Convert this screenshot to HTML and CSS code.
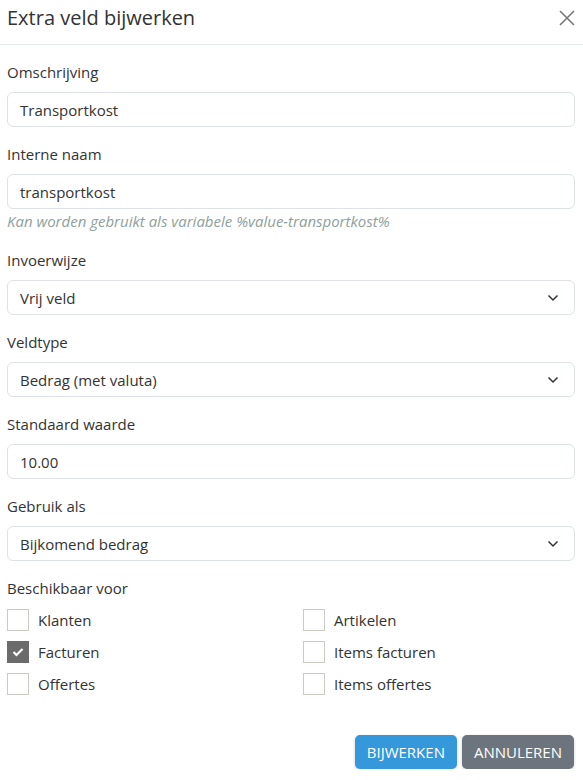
FILE: index.html
```html
<!DOCTYPE html>
<html lang="nl">
<head>
<meta charset="utf-8">
<link rel="stylesheet" href="styles.css">
</head>
<body>
<div class="modal">
  <div class="header">
    <h1 class="title">Extra veld bijwerken</h1>
    <svg class="close" width="16" height="16" viewBox="0 0 16 16"><path d="M1 1L15 15M15 1L1 15" stroke="#777" stroke-width="1.6" fill="none"/></svg>
  </div>
  <div class="body">
    <div class="group">
      <label class="label">Omschrijving</label>
      <div class="field">Transportkost</div>
    </div>
    <div class="group">
      <label class="label">Interne naam</label>
      <div class="field">transportkost</div>
      <div class="hint">Kan worden gebruikt als variabele %value-transportkost%</div>
    </div>
    <div class="group">
      <label class="label">Invoerwijze</label>
      <div class="field select">Vrij veld<svg class="chev" width="12" height="8" viewBox="0 0 12 8"><path d="M1.5 1.5L6 6L10.5 1.5" stroke="#333" stroke-width="1.5" fill="none"/></svg></div>
    </div>
    <div class="group">
      <label class="label">Veldtype</label>
      <div class="field select">Bedrag (met valuta)<svg class="chev" width="12" height="8" viewBox="0 0 12 8"><path d="M1.5 1.5L6 6L10.5 1.5" stroke="#333" stroke-width="1.5" fill="none"/></svg></div>
    </div>
    <div class="group">
      <label class="label">Standaard waarde</label>
      <div class="field">10.00</div>
    </div>
    <div class="group">
      <label class="label">Gebruik als</label>
      <div class="field select">Bijkomend bedrag<svg class="chev" width="12" height="8" viewBox="0 0 12 8"><path d="M1.5 1.5L6 6L10.5 1.5" stroke="#333" stroke-width="1.5" fill="none"/></svg></div>
    </div>
    <div class="group last">
      <label class="label">Beschikbaar voor</label>
      <div class="checks">
        <div class="check"><span class="box"></span>Klanten</div>
        <div class="check"><span class="box"></span>Artikelen</div>
        <div class="check"><span class="box checked"><svg width="12" height="10" viewBox="0 0 12 10"><path d="M1.5 5L4.5 8L10.5 2" stroke="#fff" stroke-width="2.2" fill="none"/></svg></span>Facturen</div>
        <div class="check"><span class="box"></span>Items facturen</div>
        <div class="check"><span class="box"></span>Offertes</div>
        <div class="check"><span class="box"></span>Items offertes</div>
      </div>
    </div>
  </div>
  <div class="footer">
    <button class="btn primary">BIJWERKEN</button>
    <button class="btn secondary">ANNULEREN</button>
  </div>
</div>
</body>
</html>
```
FILE: styles.css
```css
* { box-sizing: border-box; }
html, body { margin: 0; padding: 0; background: #fff; }
body {
  font-family: "Open Sans", "Noto Sans", sans-serif;
  color: #333;
  width: 583px;
}
.header {
  height: 45px;
  border-bottom: 1px solid #e9ecef;
  display: flex;
  align-items: flex-start;
  justify-content: space-between;
  padding: 5px 8px 0 7px;
}
.title {
  margin: 0;
  font-size: 20px;
  font-weight: 400;
  line-height: 26px;
  color: #333;
}
.close { margin-top: 5px; }
.body { padding: 16px 8px 0 7px; }
.group { margin-bottom: 16px; }
.group.last { margin-bottom: 0; }
.label {
  display: block;
  font-size: 15px;
  line-height: 22px;
  margin-bottom: 9px;
}
.field {
  height: 35px;
  border: 1px solid #dee2e6;
  border-radius: 6px;
  padding: 0 12px;
  font-size: 15px;
  display: flex;
  align-items: center;
  justify-content: space-between;
}
.chev { margin-right: 3px; }
.hint {
  font-size: 15px;
  font-style: italic;
  color: #8d9f9c;
  line-height: 20px;
  margin-top: 2px;
  padding-bottom: 2px;
}
.checks {
  display: grid;
  grid-template-columns: 296px 1fr;
  row-gap: 10px;
  padding-top: 1px;
}
.check {
  display: flex;
  align-items: center;
  height: 22px;
  font-size: 15px;
}
.box {
  width: 22px;
  height: 22px;
  border: 1px solid #cdc9c3;
  margin-right: 9px;
  display: flex;
  align-items: center;
  justify-content: center;
  flex: none;
}
.box.checked { background: #6b6b6b; border-color: #6b6b6b; }
.footer {
  display: flex;
  justify-content: flex-end;
  gap: 5px;
  padding: 40px 9px 0 0;
}
.btn {
  height: 34px;
  border: none;
  border-radius: 5px;
  color: #fff;
  font-family: "Open Sans", "Noto Sans", sans-serif;
  font-size: 15px;
  padding: 0 12px;
  box-shadow: 0 1px 3px rgba(0,0,0,0.2);
}
.primary { background: #3498db; }
.secondary { background: #6c757d; }
```
